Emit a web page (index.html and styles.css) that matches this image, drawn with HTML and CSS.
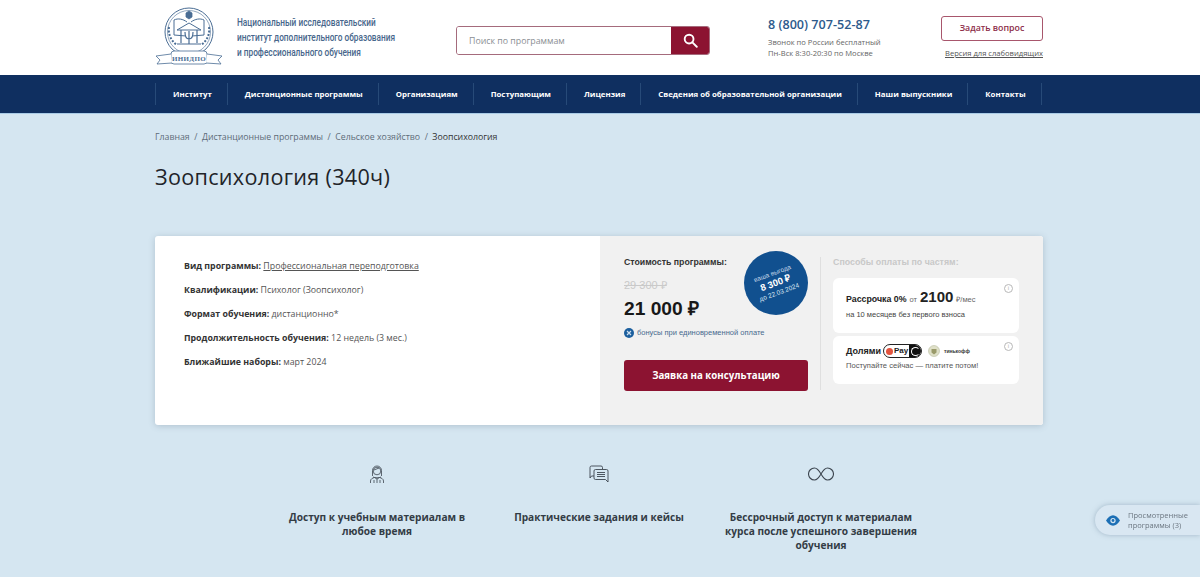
FILE: index.html
```html
<!DOCTYPE html>
<html lang="ru">
<head>
<meta charset="utf-8">
<title>Зоопсихология (340ч)</title>
<link rel="stylesheet" href="styles.css">
</head>
<body>
<header class="header">
  <div class="wrap header-row">
    <a class="brand" href="#">
      <svg class="logo" viewBox="0 0 68 60" width="68" height="60" fill="none" stroke="#4a6d94" stroke-width=".8">
        <circle cx="34" cy="25" r="24" stroke-width="1"/>
        <circle cx="34" cy="25" r="21.5" stroke-width=".6"/>
        <path d="M19 13v15l12 1M49 13v15l-12 1M19 13c4-2 9-1 13 2M49 13c-4-2-9-1-13 2" stroke-width="1"/>
        <path d="M34 4l3 2v4l-3 2-3-2V6z" fill="#4a6d94"/>
        <path d="M22 23l12-7 12 7z" stroke-width="1"/>
        <path d="M26 23v13M42 23v13M22 37h24" stroke-width="1.2"/>
        <path d="M30 25c0 5 1 7 4 7s4-2 4-7M34 24v13" stroke-width="1.2"/>
        <path d="M14 20c-1 7 2 14 8 18M54 20c1 7-2 14-8 18" stroke-width="2" stroke-dasharray="2 1.5"/>
        <path d="M16 46c6 1 8-1 8-1v10h20V45s2 2 8 1" fill="#fff"/>
        <rect x="16" y="44" width="36" height="13" rx="3" fill="#fff"/>
        <path d="M16 47L1 49l4 4-3 4 15-1M52 47l15 2-4 4 3 4-15-1" fill="#fff"/>
        <text class="logo-mark" x="34" y="54" text-anchor="middle">ИНИДПО</text>
      </svg>
      <span class="brand-text">Национальный исследовательский<br>институт дополнительного образования<br>и профессионального обучения</span>
    </a>
    <form class="search">
      <span class="search-field">Поиск по программам</span>
      <span class="search-btn">
        <svg viewBox="0 0 16 16" width="15" height="15" fill="none" stroke="#fff" stroke-width="2"><circle cx="6.5" cy="6.5" r="4.7"/><path d="M10 10l4.700 4.700" stroke-linecap="round"/></svg>
      </span>
    </form>
    <div class="contact">
      <div class="phone">8 (800) 707-52-87</div>
      <div class="contact-note">Звонок по России бесплатный<br>Пн-Вск 8:30-20:30 по Москве</div>
    </div>
    <div class="actions">
      <a class="ask" href="#">Задать вопрос</a>
      <a class="vision" href="#">Версия для слабовидящих</a>
    </div>
  </div>
</header>

<nav class="nav">
  <div class="wrap nav-row">
    <a href="#">Институт</a>
    <a href="#">Дистанционные программы</a>
    <a href="#">Организациям</a>
    <a href="#">Поступающим</a>
    <a href="#">Лицензия</a>
    <a href="#">Сведения об образовательной организации</a>
    <a href="#">Наши выпускники</a>
    <a href="#">Контакты</a>
  </div>
</nav>

<main class="wrap">
  <div class="crumbs">
    <a href="#">Главная</a><i>/</i><a href="#">Дистанционные программы</a><i>/</i><a href="#">Сельское хозяйство</a><i>/</i><span>Зоопсихология</span>
  </div>
  <h1 class="title">Зоопсихология (340ч)</h1>

  <section class="card">
    <div class="facts">
      <p><b>Вид программы:</b> <a href="#">Профессиональная переподготовка</a></p>
      <p><b>Квалификации:</b> Психолог (Зоопсихолог)</p>
      <p><b>Формат обучения:</b> дистанционно*</p>
      <p><b>Продолжительность обучения:</b> 12 недель (3 мес.)</p>
      <p><b>Ближайшие наборы:</b> март 2024</p>
    </div>
    <div class="buy">
      <div class="price">
        <div class="price-label">Стоимость программы:</div>
        <div class="price-old">29 300 ₽</div>
        <div class="price-new">21 000 ₽</div>
        <div class="bonus">
          <svg viewBox="0 0 10 10" width="10" height="10"><circle cx="5" cy="5" r="5" fill="#1c5f9e"/><path d="M3 3l4 4M7 3L3 7" stroke="#cfe0ef" stroke-width="1.2"/></svg>
          <span>бонусы при единовременной оплате</span>
        </div>
        <a class="cta" href="#">Заявка на консультацию</a>
        <div class="badge">
          <div class="badge-in">
            <span class="b1">ваша выгода</span>
            <span class="b2">8 300 ₽</span>
            <span class="b3">до 22.03.2024</span>
          </div>
        </div>
      </div>
      <div class="pay">
        <div class="pay-title">Способы оплаты по частям:</div>
        <div class="pay-card pay-first">
          <span class="info">i</span>
          <div class="pay-line"><b>Рассрочка 0%</b> <small>от</small> <strong>2100</strong> <small>₽/мес</small></div>
          <div class="pay-sub">на 10 месяцев без первого взноса</div>
        </div>
        <div class="pay-card pay-second">
          <span class="info">i</span>
          <div class="pay-line2">
            <b>Долями</b>
            <span class="opay"><i class="dot"></i><em>Pay</em><i class="opay-end"></i></span>
            <svg class="tk" viewBox="0 0 12 12" width="12" height="12"><circle cx="6" cy="6" r="5.5" fill="#dfe0c8" stroke="#b9bca0" stroke-width=".6"/><path d="M3.5 4h5v3.500L6 9.500 3.500 7.500z" fill="#9a9a6a"/></svg>
            <span class="tk-name">тинькофф</span>
          </div>
          <div class="pay-sub2">Поступайте сейчас — платите потом!</div>
        </div>
      </div>
    </div>
  </section>

  <section class="benefits">
    <div class="benefit">
      <svg viewBox="0 0 16 20" width="16" height="20" fill="none" stroke="#3d4650" stroke-width=".8"><path d="M3.500 12V6.500a4.500 4.500 0 019 0V12M4 13c1.500 1 6.500 1 8 0"/><circle cx="8" cy="7" r="3.800"/><path d="M5 6l5-2M1.500 19v-2c0-2 2-3 4-3.500L8 15l2.500-1.500c2 .5 4 1.500 4 3.500v2M5 16v3M11 16v3M8 15v4"/></svg>
      <h3>Доступ к учебным материалам в любое время</h3>
    </div>
    <div class="benefit">
      <svg viewBox="0 0 20 18" width="20" height="18" fill="none" stroke="#3d4650" stroke-width=".9"><path d="M5 11H2.500L1 13V2.500A1.500 1.500 0 012.500 1H12a1.500 1.500 0 011.500 1.500V4"/><path d="M6.500 4.500h11A1.500 1.500 0 0119 6v8l0 3-2.500-2.500h-10A1.500 1.500 0 015 13V6a1.500 1.500 0 011.500-1.500z"/><path d="M8 7.500h8M8 9.500h8M8 11.500h8"/></svg>
      <h3>Практические задания и кейсы</h3>
    </div>
    <div class="benefit">
      <svg viewBox="0 0 26 14" width="26" height="14" fill="none" stroke="#3d4650" stroke-width="1.100"><path d="M13 7C11 3.500 9.500 1 6.500 1a6 6 0 000 12c3 0 4.500-2.500 6.500-6s3.500-6 6.500-6a6 6 0 010 12c-3 0-4.500-2.500-6.500-6z"/></svg>
      <h3>Бессрочный доступ к материалам курса после успешного завершения обучения</h3>
    </div>
  </section>
</main>

<aside class="viewed">
  <svg viewBox="0 0 16 12" width="14" height="11"><path d="M0 6c2-3.500 5-6 8-6s6 2.500 8 6c-2 3.500-5 6-8 6S2 9.500 0 6z" fill="#1c6fb5"/><circle cx="8" cy="6" r="3" fill="#d6e5f1"/><circle cx="8" cy="6" r="1.600" fill="#1c6fb5"/></svg>
  <span>Просмотренные<br>программы (3)</span>
</aside>
</body>
</html>
```

FILE: styles.css
```css
* { box-sizing: border-box; }
html, body { margin: 0; padding: 0; }
body {
  height: 577px;
  overflow: hidden;
  background: #d5e6f1;
  font-family: "Open Sans", "Noto Sans", sans-serif;
  color: #333;
}
a { color: inherit; text-decoration: none; }
.wrap { width: 888px; margin-left: 155px; }

/* header */
.header { background: #fff; height: 75px; }
.header-row { display: flex; align-items: flex-start; height: 75px; }
.brand { display: flex; width: 301px; padding-top: 7px; }
.logo { flex: none; }
.logo-mark { font-family: "Liberation Serif", serif; font-size: 7px; font-weight: 700; fill: #4a6d94; stroke: none; letter-spacing: .3px; }
.brand-text {
  margin: 8px 0 0 14px;
  font-family: "Roboto", sans-serif;
  font-size: 11.500px;
  line-height: 15px;
  font-weight: 500;
  color: #48678c;
  white-space: nowrap;
  transform: scaleX(.72);
  transform-origin: left top;
}
.search {
  display: flex;
  width: 254px;
  height: 29px;
  margin-top: 26px;
  border: 1px solid #a56b7c;
  border-radius: 3px;
  overflow: hidden;
}
.search-field { flex: 1; padding: 0 12px; font-size: 8.800px; line-height: 29px; color: #8b8f94; background: #fff; }
.search-btn { width: 38px; background: #8c1331; display: flex; align-items: center; justify-content: center; }
.contact { margin-left: 58px; width: 173px; padding-top: 16px; }
.phone { font-size: 12.600px; line-height: 18px; font-weight: 600; color: #2d5a8c; }
.contact-note { margin-top: 3px; font-size: 7.600px; line-height: 11px; color: #666; }
.actions { width: 102px; padding-top: 16px; display: flex; flex-direction: column; align-items: flex-end; }
.ask {
  width: 102px;
  height: 25px;
  border: 1px solid #a8566c;
  border-radius: 3px;
  text-align: center;
  font-size: 8.800px;
  line-height: 23px;
  font-weight: 600;
  color: #8c2d48;
}
.vision { margin-top: 6px; font-size: 7.600px; line-height: 12px; color: #555; text-decoration: underline; white-space: nowrap; }

/* nav */
.nav { background: #0f2f60; height: 39px; border-bottom: 1px solid #a9cbe6; }
.nav-row { display: flex; height: 38px; align-items: center; }
.nav-row a {
  display: block;
  height: 22px;
  padding: 0 15px 0 17px;
  border-left: 1px solid #274a78;
  font-size: 7.850px;
  line-height: 22px;
  font-weight: 700;
  color: #fff;
  white-space: nowrap;
}
.nav-row a:last-child { border-right: 1px solid #274a78; }

/* heading */
.crumbs { padding-top: 17px; font-size: 8.750px; line-height: 12px; color: #5d6b78; white-space: nowrap; }
.crumbs i { font-style: normal; margin: 0 4.500px; }
.crumbs span { color: #333; }
.title {
  margin: 19px 0 0;
  font-size: 21.600px;
  line-height: 30px;
  font-weight: 500;
  letter-spacing: .3px;
  color: #1f2429;
}

/* card */
.card {
  display: flex;
  height: 189px;
  margin-top: 44px;
  background: #fff;
  border-radius: 3px;
  box-shadow: 0 1px 6px rgba(90, 110, 130, .3);
  overflow: hidden;
}
.facts { width: 445px; padding: 20px 29px 0; font-size: 8.800px; line-height: 20px; color: #555; }
.facts p { margin: 0 0 4px; white-space: nowrap; }
.facts b { color: #333; }
.facts a { text-decoration: underline; }
.buy { flex: 1; display: flex; background: #f1f1f1; padding: 21px 24px 0; }
.price { position: relative; width: 184px; font-family: "Liberation Sans", Arial, sans-serif; }
.price-label { font-size: 8.750px; line-height: 11px; font-weight: 700; color: #333; }
.price-old { margin-top: 11px; font-size: 11px; line-height: 13px; color: #c9c9c9; text-decoration: line-through; }
.price-new { margin-top: 4px; font-size: 19.200px; line-height: 25px; font-weight: 700; color: #181818; }
.bonus { display: flex; align-items: center; gap: 3px; margin-top: 7px; font-size: 7.500px; line-height: 10px; color: #476a8e; white-space: nowrap; }
.cta {
  display: block;
  height: 31px;
  margin-top: 22px;
  background: #8c1331;
  border-radius: 3px;
  text-align: center;
  font-family: "Open Sans", sans-serif;
  font-size: 9.700px;
  line-height: 31px;
  font-weight: 700;
  color: #fff;
}
.badge {
  position: absolute;
  top: -6px;
  right: 0;
  width: 64px;
  height: 64px;
  border-radius: 50%;
  background: #11508f;
  display: flex;
  align-items: center;
  justify-content: center;
}
.badge-in { display: flex; flex-direction: column; align-items: center; transform: rotate(-20deg); color: #fff; white-space: nowrap; }
.b1 { font-size: 6.500px; line-height: 8px; color: #c7d8e8; }
.b2 { font-size: 9.500px; line-height: 12px; font-weight: 700; }
.b3 { font-size: 6.500px; line-height: 8px; color: #d8e4ef; }
.pay {
  position: relative;
  width: 199px;
  margin-left: 12px;
  height: 133px;
  padding-left: 12px;
  border-left: 1px solid #dfdfdf;
  font-family: "Liberation Sans", Arial, sans-serif;
}
.pay-title { font-size: 8.850px; line-height: 11px; font-weight: 700; color: #c8c8c8; white-space: nowrap; }
.pay-card { position: relative; background: #fff; border-radius: 6px; width: 186px; }
.pay-first { height: 55px; margin-top: 10px; padding: 10px 13px 0; }
.pay-second { height: 48px; margin-top: 3px; padding: 8px 13px 0; }
.info {
  position: absolute;
  top: 6px;
  right: 6px;
  width: 9px;
  height: 9px;
  border: 1px solid #b8b8b8;
  border-radius: 50%;
  font-size: 6px;
  line-height: 7px;
  text-align: center;
  color: #b0b0b0;
}
.pay-line { display: flex; align-items: baseline; gap: 3px; font-size: 8.800px; line-height: 17px; color: #222; white-space: nowrap; }
.pay-line small { font-size: 7.500px; color: #666; }
.pay-line strong { font-size: 15px; font-weight: 700; }
.pay-sub { margin-top: 1px; font-size: 7.500px; line-height: 11px; color: #444; white-space: nowrap; }
.pay-line2 { display: flex; align-items: center; font-size: 9px; line-height: 14px; color: #222; white-space: nowrap; }
.opay {
  display: flex;
  align-items: center;
  margin-left: 2px;
  width: 39px;
  height: 14px;
  border: 1px solid #222;
  border-radius: 7px;
  background: #fff;
  overflow: hidden;
}
.dot { width: 7px; height: 7px; margin-left: 2px; border-radius: 50%; background: #e2533f; }
.opay em { margin-left: 1px; font-style: normal; font-size: 8px; font-weight: 700; line-height: 12px; color: #222; }
.opay-end { flex: 1; height: 100%; margin-left: 1px; background: #111; display: flex; align-items: center; justify-content: center; }
.opay-end::after {
  content: "";
  width: 7px;
  height: 7px;
  border: 1.500px solid #fff;
  border-right-color: transparent;
  border-radius: 50%;
}
.tk { margin-left: 6px; }
.tk-name { margin-left: 4px; font-size: 5px; font-weight: 700; color: #333; }
.pay-sub2 { margin-top: 2px; font-size: 7.600px; line-height: 12px; color: #555; white-space: nowrap; }

/* benefits */
.benefits { display: grid; grid-template-columns: repeat(3, 222px); justify-content: center; margin-top: 39px; }
.benefit { display: flex; flex-direction: column; align-items: center; text-align: center; }
.benefit svg { height: 20px; display: block; }
.benefit h3 { margin: 26px 0 0; width: 200px; font-size: 10.150px; line-height: 14px; font-weight: 700; color: #333c45; }

/* viewed tab */
.viewed {
  position: fixed;
  top: 505px;
  right: 0;
  width: 105px;
  height: 30px;
  display: flex;
  align-items: center;
  gap: 8px;
  padding-left: 11px;
  background: #d9e7f2;
  border-radius: 15px 0 0 15px;
  box-shadow: 0 0 5px rgba(110, 135, 160, .5);
  font-size: 7.500px;
  line-height: 10px;
  color: #6b7680;
  white-space: nowrap;
}
```
